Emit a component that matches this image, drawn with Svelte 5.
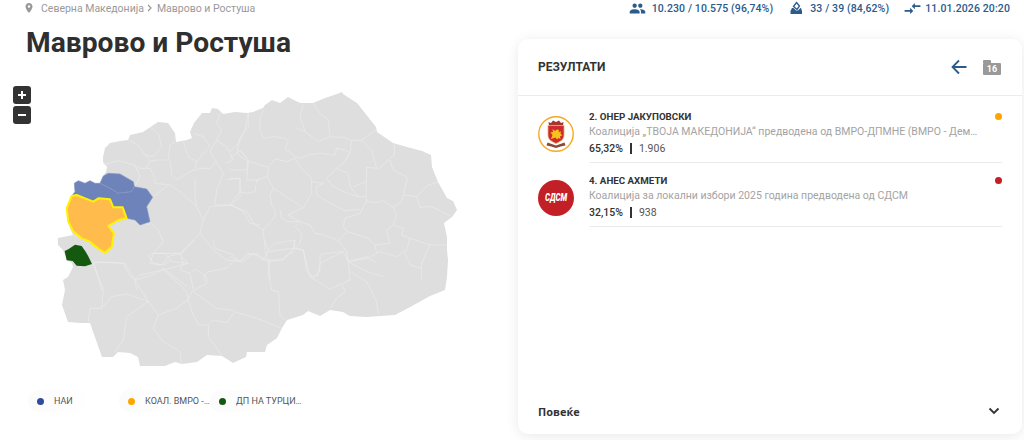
<script>
  const outline = "M103 157 105 148 110 143 120 141 128 140 130 135 143 132 158 122 168 123 175 133 176 142 187 140 192 138 190 132 194 123 202 113 210 113 212 108 218 109 223 114 235 112 247 113 253 112 263 108 265 105 272 100 280 103 288 97 300 103 313 103 325 98 337 94 342 92 343 94 357 103 365 113 376 127 377 132 393 143 407 147 422 151 431 155 432 167 438 182 447 198 453 201 457 210 452 217 444 223 447 237 447 250 448 260 447 277 445 290 430 296 412 306 395 315 380 316 367 317 350 316 348 315 343 312 330 310 320 316 308 311 303 315 287 320 282 328 277 338 267 345 265 352 247 352 246 357 233 363 222 356 207 355 197 362 182 364 175 362 165 366 140 366 138 357 130 353 118 352 113 357 102 357 90 323 80 323 68 322 62 305 65 290 63 280 68 277 73 267 72 263 67 260 63 250 58 245 58 238 73 235 68 223 67 208 70 197 72 196 75 192 74 183 78 181 85 183 90 181 95 183 100 183 103 176 106 172 107 167 103 162Z";

  const groups = [
    { t: "translate(40 90) scale(.3333)", lines: [
      "265,150 295,165 315,195 340,200 365,170 355,130 330,110",
      "315,195 330,215 350,210 385,210 390,165 405,155",
      "190,225 235,212 285,225 300,235 330,235 345,265 345,280 390,285 420,305 470,350 490,390 480,430 520,480 560,510 600,515 625,495 660,490",
      "285,225 300,260 285,290",
      "330,215 318,235",
      "338,322 385,285",
      "390,210 395,255 410,270 450,245 480,235 510,235 530,215",
      "430,155 445,200 470,215",
      "460,130 490,140 510,170 490,190 470,215 465,235",
      "540,70 530,100 545,120 530,150 510,185 525,210 550,250 530,300 525,345 575,345 600,320 600,265 560,270",
      "530,150 560,170 580,210 555,220",
      "625,70 625,110 600,145 590,190 625,215 620,270 660,270",
      "465,265 465,320 470,350",
      "575,345 610,365 630,400 660,405",
      "490,390 510,350 575,345",
      "330,395 355,420 370,455 340,490 330,520 365,525 385,500 420,490 430,520 420,540 450,550 460,600",
      "340,490 425,490 430,480 480,430",
      "155,522 180,516 250,520 270,560 290,570 350,550 370,535 440,590",
      "160,520 180,580 185,600",
      "285,570 290,600",
      "285,390 330,405",
      "100,435 125,445"
    ]},
    { t: "translate(230 80) scale(.3333)", lines: [
      "55,100 45,150 25,190 0,215",
      "100,90 90,115 90,150 100,175 130,170 165,175 175,185 165,205 195,230 210,235 235,225 270,220 315,225 320,205 345,210 360,220 340,250 320,265 290,295 305,315 340,335 385,350 410,350",
      "220,75 210,110 225,155 265,185 300,170 295,120 270,100 250,70",
      "200,145 225,155",
      "300,170 340,172 365,182 395,180 437,150",
      "365,182 360,220",
      "395,180 425,210 440,265 445,268 470,245 480,235 493,225 493,190",
      "410,262 440,265",
      "410,262 408,350 410,365 440,368 460,362 490,382 515,365 520,345 532,292 490,270 480,240",
      "520,345 560,350 595,315 625,305",
      "560,350 570,382 605,380 660,408",
      "320,265 355,280 360,320 385,350",
      "370,320 408,305",
      "410,362 390,400 345,415 340,440 352,455 325,482 350,515 355,545 410,535 440,520 450,515 500,530 530,510 540,475 515,465 520,445 490,435 470,450 480,490 435,495 415,475 352,455",
      "490,382 500,405 490,435",
      "540,475 600,495 650,495",
      "600,495 575,550 575,600",
      "435,495 440,520",
      "575,565 540,555 525,520",
      "355,545 410,575 460,590",
      "260,320 260,345 300,370 345,392 390,388",
      "260,320 280,310 245,305",
      "115,262 135,237 170,245 195,235 210,260 245,295 245,340 220,385 215,380 130,325 112,290 115,262",
      "115,262 60,245 30,210 0,235",
      "112,290 80,300 75,335 50,340 30,335 30,295 0,295",
      "30,210 55,240 50,270 0,270",
      "130,325 120,345 125,375 135,390 135,410 100,450",
      "30,335 0,375 50,395 75,435 100,450 105,510 115,545 150,540 190,515 195,480 135,490 115,510",
      "215,385 175,405 210,425 195,440 215,460 210,490 195,505 220,510 230,570 250,595 270,570 270,525 290,520 340,515",
      "150,390 155,415 175,425 205,425",
      "210,425 240,435 255,460 280,465 325,482",
      "115,545 120,600",
      "115,545 85,525 50,520 30,545 0,530"
    ]},
    { t: "translate(80 240) scale(.3333)", lines: [
      "35,65 135,70 165,120 205,185",
      "40,70 70,150 65,205 30,205 25,245",
      "65,205 95,170 140,162 205,185 140,230 130,300 105,335",
      "205,185 235,225 220,265 250,305 300,335 305,370",
      "235,225 290,205 325,178 335,155 380,130 370,110 385,95 440,85 470,55 485,68 520,40 550,60 570,60 565,100 575,150 595,155 600,225 615,240",
      "325,178 335,215 355,255 385,255 385,290 425,345",
      "385,255 400,240 440,248 465,215 530,235 605,265",
      "340,155 410,205 465,212",
      "165,120 180,105 250,90 290,125 320,155 325,178",
      "250,90 325,70 300,45 345,0",
      "205,45 220,40 255,40 275,65 325,70",
      "205,45 220,70 250,75 275,60",
      "335,95 345,88 375,105 385,125",
      "400,0 405,25 460,45 470,55",
      "550,60 565,35 555,0",
      "565,35 640,25 670,30 690,110 750,148 785,130 795,155 770,175 750,205",
      "690,110 715,105 720,70 790,35 805,65 810,120 790,130",
      "805,65 860,50 890,70",
      "810,95 860,125 890,185 895,225",
      "570,60 610,60 640,25",
      "645,0 640,25"
    ]}
  ];

  const legend = [
    { name: "НАИ", color: "#2f4a9f" },
    { name: "КОАЛ. ВМРО - ДПМНЕ", color: "#ffa500" },
    { name: "ДП НА ТУРЦИТЕ", color: "#14590f" }
  ];
</script>

<div class="page">
  <section class="left">
    <div class="crumbs">
      <svg class="pin" viewBox="0 0 24 24" width="12" height="12"><path fill="#999" d="M12 2C8.100 2 5 5.100 5 9c0 5.200 7 13 7 13s7-7.800 7-13c0-3.900-3.100-7-7-7zm0 9.500A2.500 2.500 0 1 1 12 6.500a2.500 2.500 0 0 1 0 5z"/></svg>
      <span>Северна Македонија</span>
      <svg class="sep" viewBox="0 0 8 8" width="8" height="8"><path d="M2 1l3 3-3 3" fill="none" stroke="#999" stroke-width="1.200"/></svg>
      <span>Маврово и Ростуша</span>
    </div>
    <h1>Маврово и Ростуша</h1>
    <div class="map">
      <div class="zoom">
        <button aria-label="Зголеми"><svg viewBox="0 0 18 18" width="18" height="18"><path d="M5 9h8M9 5v8" stroke="#fff" stroke-width="2"/></svg></button>
        <button aria-label="Намали"><svg viewBox="0 0 18 18" width="18" height="18"><path d="M5 9h8" stroke="#fff" stroke-width="2"/></svg></button>
      </div>
      <svg class="geo" viewBox="0 78 518 310" width="518" height="310">
        <path d={outline} fill="#dedede"/>
        {#each groups as g}
          <g transform={g.t} fill="none" stroke="#ebebeb" stroke-width="2" stroke-linejoin="round">
            {#each g.lines as l}<polyline points={l}/>{/each}
          </g>
        {/each}
        <g transform="translate(40 90) scale(.3333)" stroke-linejoin="round">
          <path fill="#6f83bb" stroke="#8797c6" stroke-width="2" d="M180 280 190 258 205 250 240 252 280 275 283 290 275 305 235 310 210 295Z"/>
          <path fill="#6f83bb" stroke="#8797c6" stroke-width="2" d="M103 280 115 272 135 280 150 272 165 280 180 280 210 295 235 310 275 305 283 290 320 297 338 322 320 350 330 395 300 405 285 390 260 385 248 352 220 352 210 328 175 325 160 335 110 315 95 318 105 305Z"/>
          <path fill="#ffbc4d" stroke="#fff200" stroke-width="6" d="M95 318 110 315 160 335 175 325 210 328 220 352 248 352 260 385 235 390 205 408 222 430 215 470 195 488 180 480 150 455 125 445 100 425 85 395 80 355Z"/>
          <path fill="#14590f" d="M74 483 85 478 105 464 125 468 137 485 144 497 156 522 135 529 110 527 98 513 80 511Z"/>
        </g>
      </svg>
    </div>
    <ul class="legend">
      {#each legend as item}
        <li>
          <i class="swatch" style="background:{item.color}"></i>
          <span>{item.name}</span>
        </li>
      {/each}
    </ul>
  </section>

  <div class="right">
    <div class="stats">
      <div class="stat">
        <svg viewBox="0 0 24 24" width="17" height="17"><path fill="#2b5a8c" d="M16 11c1.660 0 2.990-1.340 2.990-3S17.660 5 16 5c-1.660 0-3 1.340-3 3s1.340 3 3 3zm-8 0c1.660 0 2.990-1.340 2.990-3S9.660 5 8 5C6.340 5 5 6.340 5 8s1.340 3 3 3zm0 2c-2.330 0-7 1.170-7 3.500V19h14v-2.500c0-2.330-4.670-3.500-7-3.500zm8 0c-.29 0-.62.02-.97.05 1.160.84 1.970 1.970 1.970 3.450V19h6v-2.500c0-2.330-4.670-3.500-7-3.500z"/></svg>
        <span>10.230 / 10.575 (96,74%)</span>
      </div>
      <div class="stat">
        <svg viewBox="0 0 15 15" width="15" height="15"><path fill="none" stroke="#2b5a8c" stroke-width="1.300" d="M7.500 1.500 10.500 5 8 8.500 4.500 5.500z"/><path fill="#2b5a8c" d="M3 7h1.500L7 9.500h2L11.500 7H12l1 3v3H1.500v-3z"/></svg>
        <span>33 / 39 (84,62%)</span>
      </div>
      <div class="stat swap">
        <svg viewBox="0 0 24 24" width="19" height="19"><path fill="#2b5a8c" d="M9.010 14H2v2h7.010v3L13 15l-3.990-4v3zm5.980-1v-3H22V8h-7.010V5L11 9l3.990 4z"/></svg>
        <span>11.01.2026 20:20</span>
      </div>
    </div>

    <section class="card">
      <header>
        <h2>РЕЗУЛТАТИ</h2>
        <div class="tools">
          <svg viewBox="0 0 18 18" width="18" height="18"><path d="M16.500 9H2.500M9 2.500 2.500 9 9 15.500" fill="none" stroke="#2b5a8c" stroke-width="1.800"/></svg>
          <div class="folder">16</div>
        </div>
      </header>

      <div class="rows">
        <article class="row">
          <svg class="logo" viewBox="0 0 36 36" width="36" height="36">
            <circle cx="18" cy="18" r="17.200" fill="#fff" stroke="#f7a823" stroke-width="1.400"/>
            <path fill="#a5382e" d="M11 9.500 10.500 6l2.500 1 2-2.500L18 6l3-1.500 2 2.500 2.500-1-.5 3.500z"/>
            <path fill="#cf2a2f" stroke="#e6b45a" stroke-width=".8" d="M10 9.500h16V19c0 4.500-3.500 6.500-8 8.500-4.500-2-8-4-8-8.500z"/>
            <path fill="#f6c21c" d="M13 23l1.500-4-2-2.500 2.500-.5-.5-3 2.500 2 2-1.500 2 .5-.5 2 2.500-.5-.5 2.500 2 1-2.500 1.500.5 2.500-2-1-1.500 1.500-1.500-2z"/>
            <path fill="#8a4a35" d="M9.500 26.500c3 1 5.500 2 8.500 3 3-1 5.500-2 8.500-3l1 3c-3.500.5-6 1.500-9.500 2.500-3.500-1-6-2-9.500-2.500z"/>
          </svg>
          <div class="info">
            <h3>2. ОНЕР ЈАКУПОВСКИ</h3>
            <p>Коалиција „ТВОЈА МАКЕДОНИЈА“ предводена од ВМРО-ДПМНЕ (ВМРО - Демократска партија)</p>
            <div class="nums"><b>65,32%</b><span>1.906</span></div>
          </div>
          <i class="dot orange"></i>
        </article>
        <article class="row">
          <div class="sdsm"><span>СДСМ</span></div>
          <div class="info">
            <h3>4. АНЕС АХМЕТИ</h3>
            <p>Коалиција за локални избори 2025 година предводена од СДСМ</p>
            <div class="nums"><b>32,15%</b><span>938</span></div>
          </div>
          <i class="dot red"></i>
        </article>
      </div>

      <footer>
        <span>Повеќе</span>
        <svg viewBox="0 0 12 12" width="12" height="12"><path d="M1.500 3.500 6 8l4.500-4.500" fill="none" stroke="#333" stroke-width="1.800"/></svg>
      </footer>
    </section>
  </div>
</div>

<style>
  :global(body) {
    margin: 0;
    background: #fff;
  }
  .page {
    width: 1024px;
    height: 440px;
    overflow: hidden;
    display: flex;
    font-family: Roboto, "Liberation Sans", sans-serif;
    color: #333;
  }
  .left {
    width: 518px;
    flex: none;
  }
  .crumbs {
    display: flex;
    align-items: center;
    height: 16px;
    padding-left: 23px;
    font-size: 10.500px;
    color: #999;
  }
  .pin { margin-right: 6px; }
  .sep { margin: 0 2.500px; }
  h1 {
    margin: 9px 0 17px 26px;
    font-size: 28.200px;
    line-height: 36px;
    font-weight: 700;
    color: #2f2f2f;
  }
  .map {
    position: relative;
    height: 310px;
  }
  .geo { display: block; }
  .zoom {
    position: absolute;
    left: 13px;
    top: 8px;
    display: flex;
    flex-direction: column;
    gap: 2px;
    z-index: 1;
  }
  .zoom button {
    width: 18px;
    height: 18px;
    padding: 0;
    border: 0;
    border-radius: 3px;
    background: #333;
    display: block;
  }
  .zoom svg { display: block; }
  .legend {
    list-style: none;
    margin: 2px 0 0 28px;
    padding: 0;
    display: flex;
  }
  .legend li {
    width: 91px;
    height: 22px;
    display: flex;
    align-items: center;
    box-sizing: border-box;
    padding-left: 9px;
    font-size: 9px;
    color: #555;
    background: linear-gradient(90deg, #fbfbfb, #fff 70%);
    border-radius: 11px;
  }
  .legend span {
    width: 66px;
    flex: none;
    white-space: nowrap;
    overflow: hidden;
    text-overflow: ellipsis;
  }
  .swatch {
    width: 7px;
    height: 7px;
    border-radius: 50%;
    margin-right: 10px;
    flex: none;
  }
  .right {
    flex: 1;
    min-width: 0;
  }
  .stats {
    display: flex;
    justify-content: flex-end;
    align-items: center;
    gap: 16px;
    height: 16px;
    margin-bottom: 23px;
    padding-right: 14px;
    font-size: 10.500px;
    letter-spacing: 0.12px;
    font-weight: 500;
    color: #2b5a8c;
  }
  .stat {
    display: flex;
    align-items: center;
    gap: 6px;
  }
  .swap {
    gap: 3px;
    margin-left: -2px;
  }
  .card {
    width: 504px;
    height: 395px;
    border-radius: 10px;
    background: #fff;
    box-shadow: 0 2px 14px rgba(0, 0, 0, 0.09);
    display: flex;
    flex-direction: column;
  }
  header {
    height: 57px;
    flex: none;
    box-sizing: border-box;
    padding: 0 21px 0 20px;
    border-bottom: 1px solid #ececec;
    display: flex;
    align-items: center;
    justify-content: space-between;
  }
  h2 {
    margin: 0;
    font-size: 12px;
    font-weight: 700;
    color: #333;
  }
  .tools {
    display: flex;
    align-items: center;
    gap: 15px;
  }
  .folder {
    width: 18px;
    height: 12px;
    margin-top: 3px;
    background: #999;
    border-radius: 1px;
    color: #fff;
    font-size: 9px;
    font-weight: 700;
    line-height: 12px;
    text-align: center;
    position: relative;
  }
  .folder::before {
    content: "";
    position: absolute;
    left: 0;
    top: -3px;
    width: 8px;
    height: 3px;
    background: #999;
    border-radius: 1px 1px 0 0;
  }
  .rows {
    flex: 1;
    padding: 3px 20px 0;
  }
  .row {
    height: 64px;
    position: relative;
    display: flex;
    align-items: center;
    gap: 15px;
  }
  .logo, .sdsm {
    width: 36px;
    height: 36px;
    flex: none;
    margin-top: 5px;
  }
  .sdsm {
    border-radius: 50%;
    background: #c31f26;
    color: #fff;
    display: flex;
    align-items: center;
    justify-content: center;
    font-size: 10px;
    font-weight: 900;
    font-style: italic;
  }
  .sdsm span {
    display: block;
    transform: scaleX(0.78);
  }
  .info {
    flex: 1;
    min-width: 0;
    align-self: stretch;
    box-sizing: border-box;
    border-bottom: 1px solid #ececec;
    padding-top: 11px;
  }
  h3 {
    margin: 0;
    font-size: 9.750px;
    line-height: 14px;
    font-weight: 700;
    color: #333;
  }
  .info p {
    margin: 0;
    width: 392px;
    font-size: 10.500px;
    line-height: 16px;
    color: #a3a3a3;
    white-space: nowrap;
    overflow: hidden;
    text-overflow: ellipsis;
  }
  .nums {
    display: flex;
    align-items: center;
    font-size: 10.500px;
    line-height: 17px;
    color: #555;
  }
  .nums b {
    font-weight: 500;
    color: #333;
    padding-right: 7px;
    margin-right: 7px;
    border-right: 2px solid #333;
    line-height: 11px;
  }
  .dot {
    position: absolute;
    right: 0;
    top: 14px;
    width: 7px;
    height: 7px;
    border-radius: 50%;
  }
  .orange { background: #ffa500; }
  .red { background: #c31f26; }
  footer {
    height: 46px;
    flex: none;
    padding: 0 22px 0 20px;
    display: flex;
    align-items: center;
    justify-content: space-between;
    font-size: 11px;
    font-weight: 700;
    color: #333;
    font-family: "Open Sans", sans-serif;
  }
</style>
